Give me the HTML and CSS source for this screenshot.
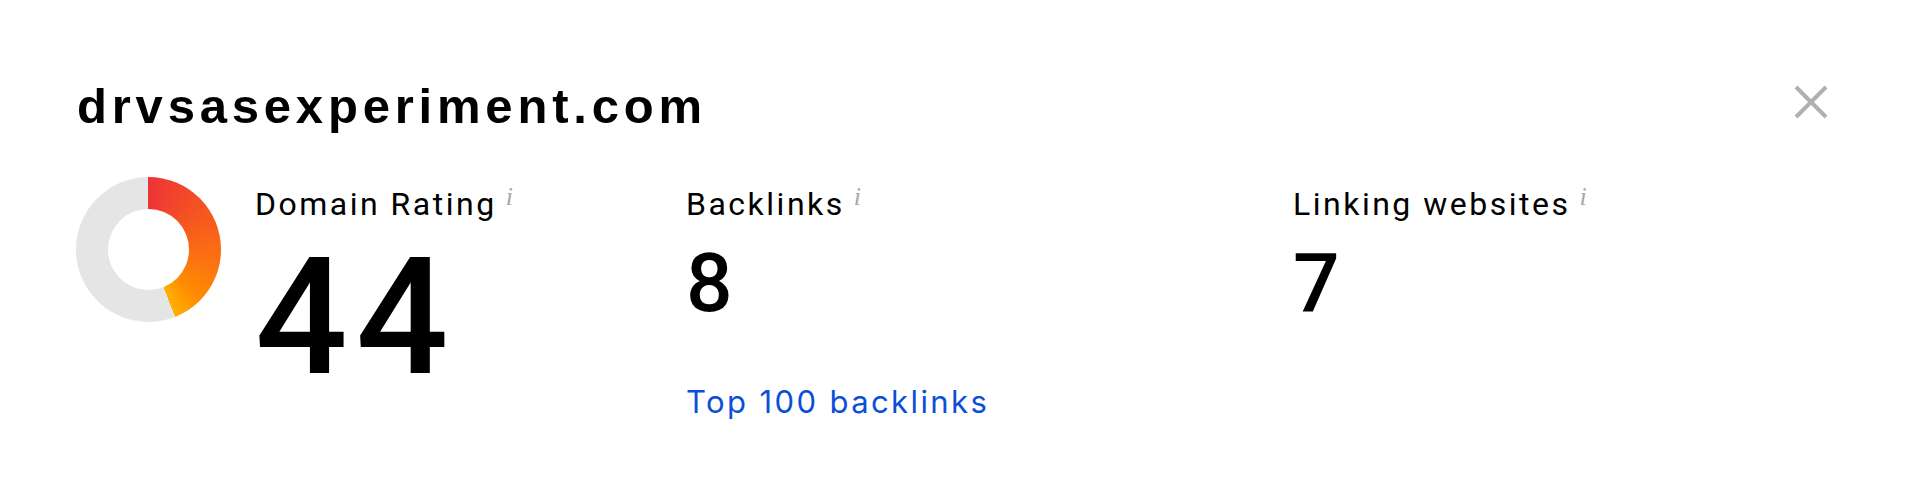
FILE: index.html
```html
<!DOCTYPE html>
<html lang="en">
<head>
    <meta charset="UTF-8">
    <meta name="viewport" content="width=device-width, initial-scale=1.0">
    <title>drvsasexperiment.com – Overview</title>
    <link rel="stylesheet" href="styles.css">
</head>
<body>
    <div class="panel">
        <div class="panel-header">
            <h1 class="domain">drvsasexperiment.com</h1>
            <button class="close" aria-label="Close">
                <svg width="34" height="34" viewBox="0 0 34 34">
                    <path d="M2 2 L32 32 M32 2 L2 32" stroke="#b0b0b0" stroke-width="4" fill="none"/>
                </svg>
            </button>
        </div>

        <div class="stats">
            <div class="stat stat-dr">
                <div class="donut"></div>
                <div class="stat-body">
                    <div class="stat-label">Domain Rating<span class="info">i</span></div>
                    <div class="stat-value big">44</div>
                </div>
            </div>

            <div class="stat">
                <div class="stat-body">
                    <div class="stat-label">Backlinks<span class="info">i</span></div>
                    <div class="stat-value">8</div>
                    <a class="stat-link" href="#">Top 100 backlinks</a>
                </div>
            </div>

            <div class="stat">
                <div class="stat-body">
                    <div class="stat-label">Linking websites<span class="info">i</span></div>
                    <div class="stat-value">7</div>
                </div>
            </div>
        </div>
    </div>
</body>
</html>
```

FILE: styles.css
```css
/* Page */
body {
    margin: 0;
    background: #fff;
    color: #000;
    font-family: 'Liberation Sans', Arial, sans-serif;
}

/* Panel */
.panel {
    padding: 84px 86px 40px 76px;
}

.panel-header {
    display: flex;
    justify-content: space-between;
    align-items: flex-start;
}

.domain {
    margin: 0;
    font-size: 49px;
    line-height: 45px;
    font-weight: 700;
    letter-spacing: 4.8px;
    padding-left: 1px;
}

.close {
    margin-top: 1px;
    padding: 0;
    border: none;
    background: none;
    cursor: pointer;
    width: 34px;
    height: 34px;
}

.close svg {
    display: block;
}

/* Stats row */
.stats {
    display: grid;
    grid-template-columns: 610px 607px 1fr;
    margin-top: 48px;
}

.stat {
    display: flex;
}

.stat-dr {
    gap: 34px;
}

/* DR ring */
.donut {
    position: relative;
    flex: none;
    width: 145px;
    height: 145px;
    border-radius: 50%;
    background: conic-gradient(#ee3338 0deg, #f5561f 55deg, #fb7212 100deg, #ff8c00 135deg, #ffb100 158.4deg, #e5e5e5 158.4deg 360deg);
}

.donut::after {
    content: "";
    position: absolute;
    left: 32px;
    top: 32px;
    width: 81px;
    height: 81px;
    border-radius: 50%;
    background: #fff;
}

.stat-body {
    padding-top: 2px;
}

.stat-label {
    font-family: Roboto, 'Liberation Sans', sans-serif;
    font-size: 32px;
    line-height: 36px;
    letter-spacing: 2.5px;
    white-space: nowrap;
}

.info {
    margin-left: 9px;
    font-family: 'Liberation Serif', serif;
    font-style: italic;
    font-size: 26px;
    color: #a8a8a8;
    vertical-align: 10px;
    letter-spacing: 0;
}

.stat-value {
    margin-top: 20px;
    font-family: Roboto, 'Liberation Sans', sans-serif;
    font-weight: 500;
    font-size: 82px;
    line-height: 82px;
}

.stat-value.big {
    margin-top: 14px;
    font-size: 163px;
    line-height: 163px;
    letter-spacing: 8px;
}

.stat-link {
    display: inline-block;
    margin-top: 60px;
    font-family: Inter, 'Liberation Sans', sans-serif;
    font-size: 31px;
    line-height: 36px;
    letter-spacing: 2.4px;
    color: #0c4fd6;
    text-decoration: none;
}
```
